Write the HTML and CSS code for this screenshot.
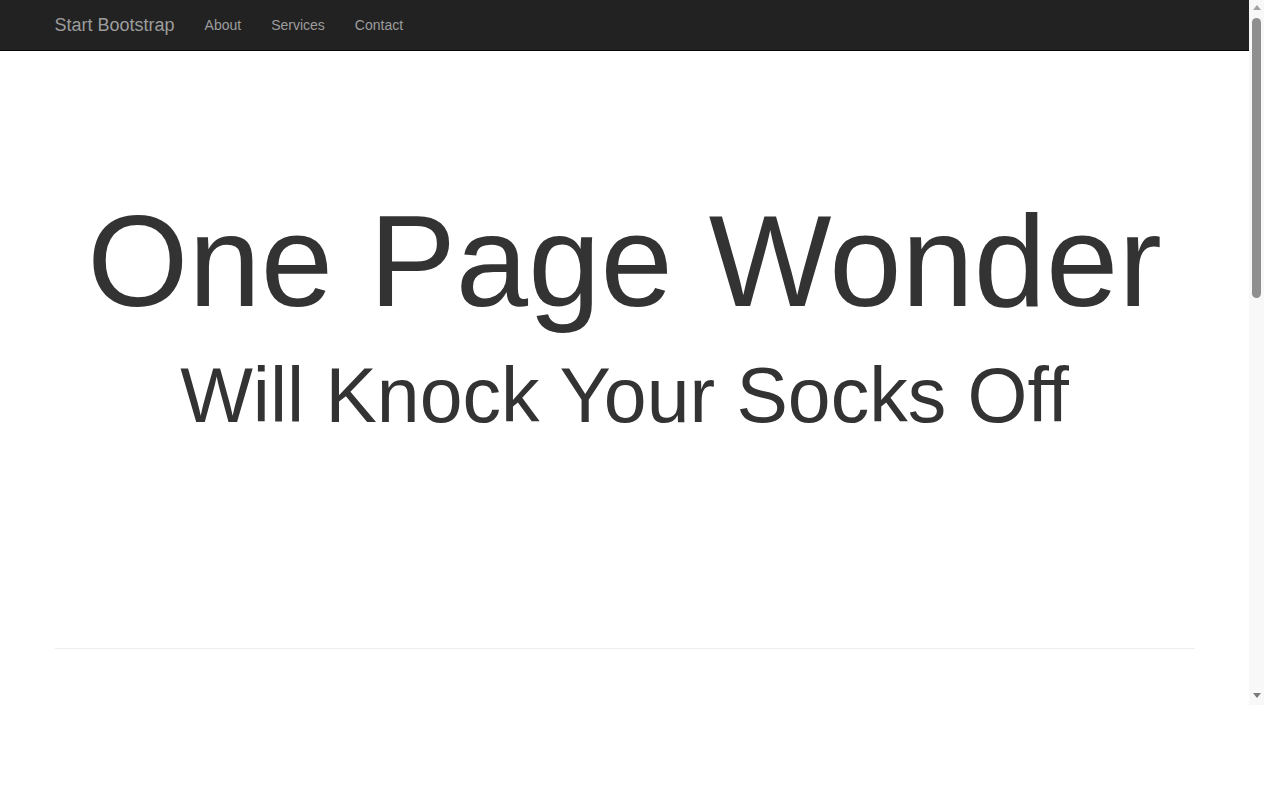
FILE: index.html
```html
<!DOCTYPE html>
<html lang="en">
<head>
<meta charset="utf-8">
<title>One Page Wonder</title>
<link rel="stylesheet" href="styles.css">
</head>
<body>
<div class="screen">
  <div class="viewport">
    <nav class="navbar">
      <div class="container nav-container">
        <a class="navbar-brand" href="#">Start Bootstrap</a>
        <ul class="nav">
          <li><a href="#">About</a></li>
          <li><a href="#">Services</a></li>
          <li><a href="#">Contact</a></li>
        </ul>
      </div>
    </nav>
    <header class="header-image">
      <div class="headline container">
        <h1>One Page Wonder</h1>
        <h2>Will Knock Your Socks Off</h2>
      </div>
    </header>
    <div class="container">
      <hr class="featurette-divider">
    </div>
  </div>
  <div class="scrollbar">
    <div class="arrow-box"><span class="arrow-up"></span></div>
    <div class="thumb"></div>
    <div class="track-fill"></div>
    <div class="arrow-box"><span class="arrow-down"></span></div>
  </div>
</div>
</body>
</html>
```
FILE: styles.css
```css
* { box-sizing: border-box; }
html, body {
  margin: 0;
  padding: 0;
  background: #fff;
  overflow: hidden;
}
body {
  font-family: "Liberation Sans", Arial, Helvetica, sans-serif;
  font-size: 14px;
  line-height: 1.42857143;
  color: #333;
}
.screen {
  display: flex;
  align-items: flex-start;
  width: 1264px;
}
.viewport {
  width: 1249px;
  height: 705px;
  overflow: hidden;
  flex: none;
}
.container {
  width: 1170px;
  margin: 0 auto;
  padding: 0 15px;
}
.navbar {
  height: 51px;
  background: #222;
  border-bottom: 1px solid #080808;
}
.nav-container {
  display: flex;
  align-items: flex-start;
}
.navbar-brand {
  display: block;
  margin-left: -15px;
  padding: 15px;
  height: 50px;
  font-size: 18px;
  line-height: 20px;
  color: #9d9d9d;
  text-decoration: none;
}
.nav {
  display: flex;
  list-style: none;
  margin: 0;
  padding: 0;
}
.nav a {
  display: block;
  padding: 15px;
  line-height: 20px;
  font-size: 14px;
  color: #9d9d9d;
  text-decoration: none;
}
.header-image {
  display: block;
  width: 100%;
  text-align: center;
}
.headline {
  padding: 119px 15px 120px;
}
.headline h1 {
  font-size: 130px;
  font-weight: 500;
  line-height: 1.1;
  margin: 20px 0 20px;
  background: rgba(255, 255, 255, 0.9);
}
.headline h2 {
  font-size: 77px;
  font-weight: 500;
  line-height: 1.1;
  margin: 0 0 10px;
  background: rgba(255, 255, 255, 0.9);
}
.featurette-divider {
  margin: 80px 0;
  border: 0;
  border-top: 1px solid #eee;
  height: 0;
}
.scrollbar {
  width: 15px;
  height: 705px;
  background: #f8f8f8;
  display: flex;
  flex-direction: column;
  align-items: center;
  flex: none;
}
.arrow-box {
  height: 17px;
  width: 15px;
  display: flex;
  align-items: center;
  justify-content: center;
  flex: none;
}
.arrow-up {
  width: 0;
  height: 0;
  border-left: 4px solid transparent;
  border-right: 4px solid transparent;
  border-bottom: 5px solid #a3a3a3;
  margin-top: -2px;
}
.arrow-down {
  width: 0;
  height: 0;
  border-left: 4px solid transparent;
  border-right: 4px solid transparent;
  border-top: 5px solid #7a7a7a;
  margin-top: -3px;
}
.thumb {
  width: 9px;
  height: 280px;
  margin-top: 1px;
  background: #8f8f8f;
  border-radius: 5px;
  flex: none;
}
.track-fill {
  flex: 1;
}
```
